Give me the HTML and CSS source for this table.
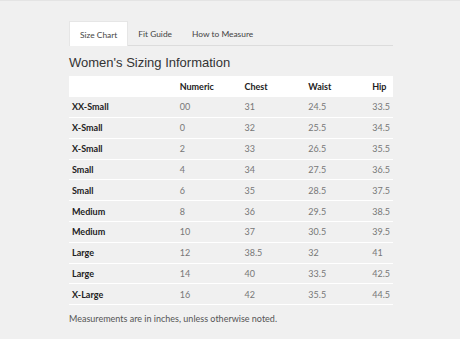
FILE: index.html
```html
<!DOCTYPE html>
<html lang="en">
<head>
    <meta charset="UTF-8">
    <title>Size Chart</title>
    <link rel="stylesheet" href="styles.css">
</head>
<body>
    <div class="container">
        <nav class="tabs">
            <span class="tab active">Size Chart</span>
            <span class="tab">Fit Guide</span>
            <span class="tab">How to Measure</span>
        </nav>

        <h2 class="title">Women's Sizing Information</h2>

        <table class="size-table">
            <thead>
                <tr>
                    <th class="col-size"></th>
                    <th class="col-num">Numeric</th>
                    <th class="col-mid">Chest</th>
                    <th class="col-mid">Waist</th>
                    <th>Hip</th>
                </tr>
            </thead>
            <tbody>
                <tr><th>XX-Small</th><td>00</td><td>31</td><td>24.5</td><td>33.5</td></tr>
                <tr><th>X-Small</th><td>0</td><td>32</td><td>25.5</td><td>34.5</td></tr>
                <tr><th>X-Small</th><td>2</td><td>33</td><td>26.5</td><td>35.5</td></tr>
                <tr><th>Small</th><td>4</td><td>34</td><td>27.5</td><td>36.5</td></tr>
                <tr><th>Small</th><td>6</td><td>35</td><td>28.5</td><td>37.5</td></tr>
                <tr><th>Medium</th><td>8</td><td>36</td><td>29.5</td><td>38.5</td></tr>
                <tr><th>Medium</th><td>10</td><td>37</td><td>30.5</td><td>39.5</td></tr>
                <tr><th>Large</th><td>12</td><td>38.5</td><td>32</td><td>41</td></tr>
                <tr><th>Large</th><td>14</td><td>40</td><td>33.5</td><td>42.5</td></tr>
                <tr><th>X-Large</th><td>16</td><td>42</td><td>35.5</td><td>44.5</td></tr>
            </tbody>
        </table>

        <p class="note">Measurements are in inches, unless otherwise noted.</p>
    </div>
</body>
</html>
```

FILE: styles.css
```css
* {
    margin: 0;
    padding: 0;
    box-sizing: border-box;
}

body {
    font-family: 'Lato', 'Noto Sans', sans-serif;
    background-color: #f0f0f0;
    color: #333;
    border-top: 1px solid #e4e4e4;
}

.container {
    width: 324px;
    margin: 20px 0 0 69px;
}

.tabs {
    display: flex;
    border-bottom: 1px solid #dcdcdc;
    height: 25px;
}

.tab {
    font-size: 8.4px;
    color: #444;
    padding: 0 10px;
    line-height: 26px;
    height: 25px;
}

.tab.active {
    background-color: #fff;
    border: 1px solid #e6e6e6;
    border-bottom: none;
}

.title {
    font-family: 'Liberation Sans', Arial, sans-serif;
    font-weight: normal;
    font-size: 13px;
    color: #333;
    margin: 9px 0 5px;
    line-height: 16px;
}

.size-table {
    width: 100%;
    border-collapse: collapse;
    font-size: 9px;
}

.size-table thead tr {
    background-color: #fff;
}

.size-table th,
.size-table td {
    text-align: left;
    height: 20.8px;
    padding: 0 3px;
}

.size-table thead th {
    font-weight: 700;
    color: #222;
}

.size-table tbody tr {
    border-bottom: 1px solid #fff;
}

.size-table tbody th {
    font-weight: 700;
    color: #222;
}

.size-table td {
    color: #777;
}

.col-size {
    width: 108px;
}

.col-num {
    width: 65px;
}

.col-mid {
    width: 64px;
}

.note {
    font-size: 9px;
    color: #555;
    margin-top: 8px;
}
```
